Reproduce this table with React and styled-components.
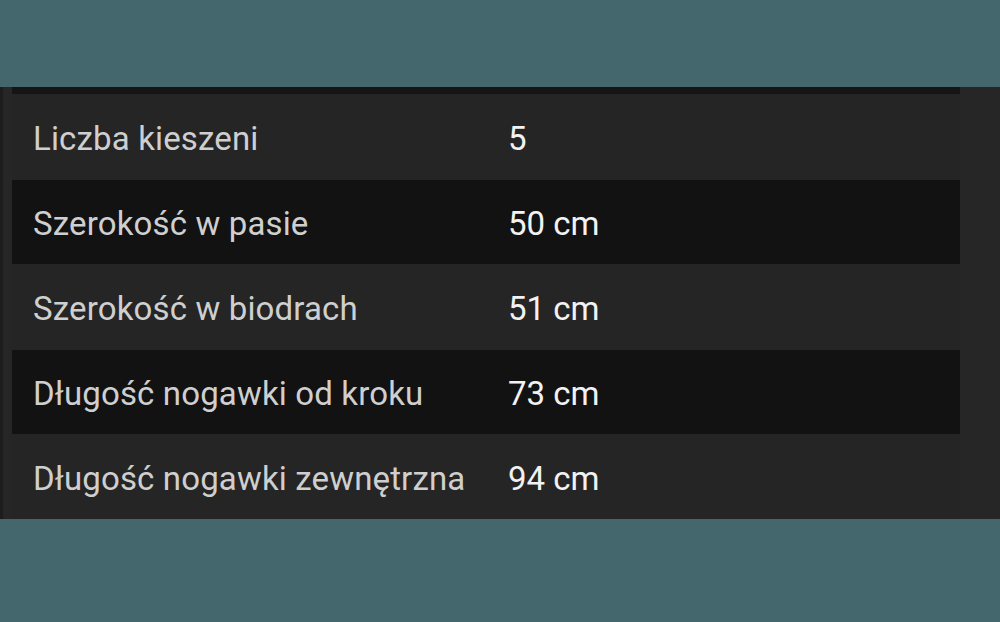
import styled, { createGlobalStyle } from "styled-components";

const GlobalStyle = createGlobalStyle`
  html, body {
    margin: 0;
    padding: 0;
    background: #43676c;
  }
  body {
    font-family: Roboto, "Noto Sans", sans-serif;
  }
`;

const Page = styled.div`
  width: 1000px;
  height: 622px;
  padding-top: 87px;
  box-sizing: border-box;
  background: #43676c;
`;

const Panel = styled.div`
  background: #262626;
  border-left: 3px solid #1d1d1d;
  padding: 0 40px 0 9px;
`;

const TopStrip = styled.div`
  height: 7px;
  background: #151515;
`;

const Row = styled.div`
  display: grid;
  grid-template-columns: 475px 1fr;
  align-items: center;
  height: ${(p) => p.$h}px;
  padding: 3px 0 0 21px;
  box-sizing: border-box;
  background: ${(p) => (p.$dark ? "#121212" : "#252525")};
`;

const Label = styled.span`
  font-size: 33px;
  color: #cfcfcf;
  letter-spacing: 0.15px;
`;

const Value = styled.span`
  font-size: 33px;
  color: #f2f2f2;
`;

const rows = [
  ["Liczba kieszeni", "5", 86],
  ["Szerokość w pasie", "50 cm", 84],
  ["Szerokość w biodrach", "51 cm", 86],
  ["Długość nogawki od kroku", "73 cm", 84],
  ["Długość nogawki zewnętrzna", "94 cm", 85],
];

export default function App() {
  return (
    <>
      <GlobalStyle />
      <Page>
        <Panel>
          <TopStrip />
          {rows.map(([label, value, h], i) => (
            <Row key={label} $dark={i % 2 === 1} $h={h}>
              <Label>{label}</Label>
              <Value>{value}</Value>
            </Row>
          ))}
        </Panel>
      </Page>
    </>
  );
}
